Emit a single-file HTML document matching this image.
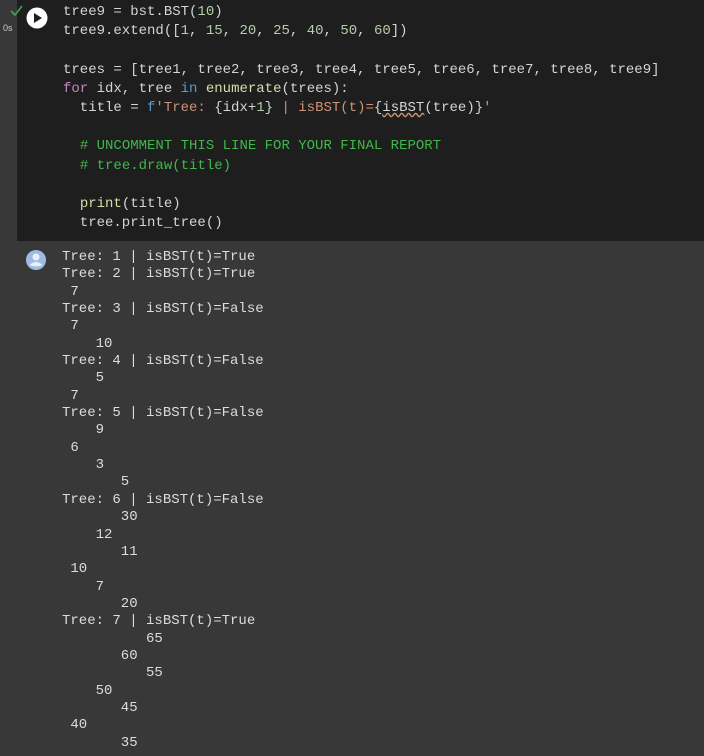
<!DOCTYPE html>
<html><head><style>
body{margin:0;width:704px;height:756px;background:#383838;overflow:hidden;position:relative;font-family:"Liberation Mono",monospace;}
.code{position:absolute;left:17px;top:0;width:687px;height:241px;background:#1e1e1e;}
pre{margin:0;font-family:"Liberation Mono",monospace;font-size:14px;white-space:pre;}
.c{position:absolute;left:63px;top:3px;line-height:19.2px;color:#d4d4d4;}
.o{position:absolute;left:62px;top:249px;line-height:17.35px;color:#dcdcdc;}
.n{color:#b5cea8}.k{color:#c586c0}.b{color:#569cd6}.y{color:#dcdcaa}.s{color:#ce9178}.g{color:#3fb84a;}
.sq{text-decoration:underline wavy #ce9178;}
</style></head><body>
<div class="code"></div>
<svg style="position:absolute;left:0;top:0" width="60" height="40">
<path d="M11 11 L15 15 L22 6" stroke="#34a853" stroke-width="1.6" fill="none"/>
<text x="3" y="31" font-size="9" fill="#ccc" font-family="Liberation Sans">0s</text>
<circle cx="37" cy="18" r="10.5" fill="#fff"/>
<path d="M34 13 L42 18 L34 23 Z" fill="#1e1e1e"/>
</svg>
<svg style="position:absolute;left:25px;top:249px" width="22" height="22">
<circle cx="11" cy="11" r="10" fill="#9fbde3"/>
<circle cx="11" cy="8" r="3.5" fill="#e8f0fb"/>
<path d="M4.5 16 Q11 10 17.5 16 Q11 19 4.5 16Z" fill="#e8f0fb"/>
</svg>
<pre class="c">tree9 = bst.BST(<span class="n">10</span>)
tree9.extend([<span class="n">1</span>, <span class="n">15</span>, <span class="n">20</span>, <span class="n">25</span>, <span class="n">40</span>, <span class="n">50</span>, <span class="n">60</span>])

trees = [tree1, tree2, tree3, tree4, tree5, tree6, tree7, tree8, tree9]
<span class="k">for</span> idx, tree <span class="b">in</span> <span class="y">enumerate</span>(trees):
  title = <span class="b">f</span><span class="s">'Tree: </span>{idx+<span class="n">1</span>}<span class="s"> | isBST(t)=</span>{<span class="sq">isBST</span>(tree)}<span class="s">'</span>

  <span class="g"># UNCOMMENT THIS LINE FOR YOUR FINAL REPORT</span>
  <span class="g"># tree.draw(title)</span>

  <span class="y">print</span>(title)
  tree.print_tree()</pre>
<pre class="o">Tree: 1 | isBST(t)=True
Tree: 2 | isBST(t)=True
 7
Tree: 3 | isBST(t)=False
 7
    10
Tree: 4 | isBST(t)=False
    5
 7
Tree: 5 | isBST(t)=False
    9
 6
    3
       5
Tree: 6 | isBST(t)=False
       30
    12
       11
 10
    7
       20
Tree: 7 | isBST(t)=True
          65
       60
          55
    50
       45
 40
       35</pre>
</body></html>
